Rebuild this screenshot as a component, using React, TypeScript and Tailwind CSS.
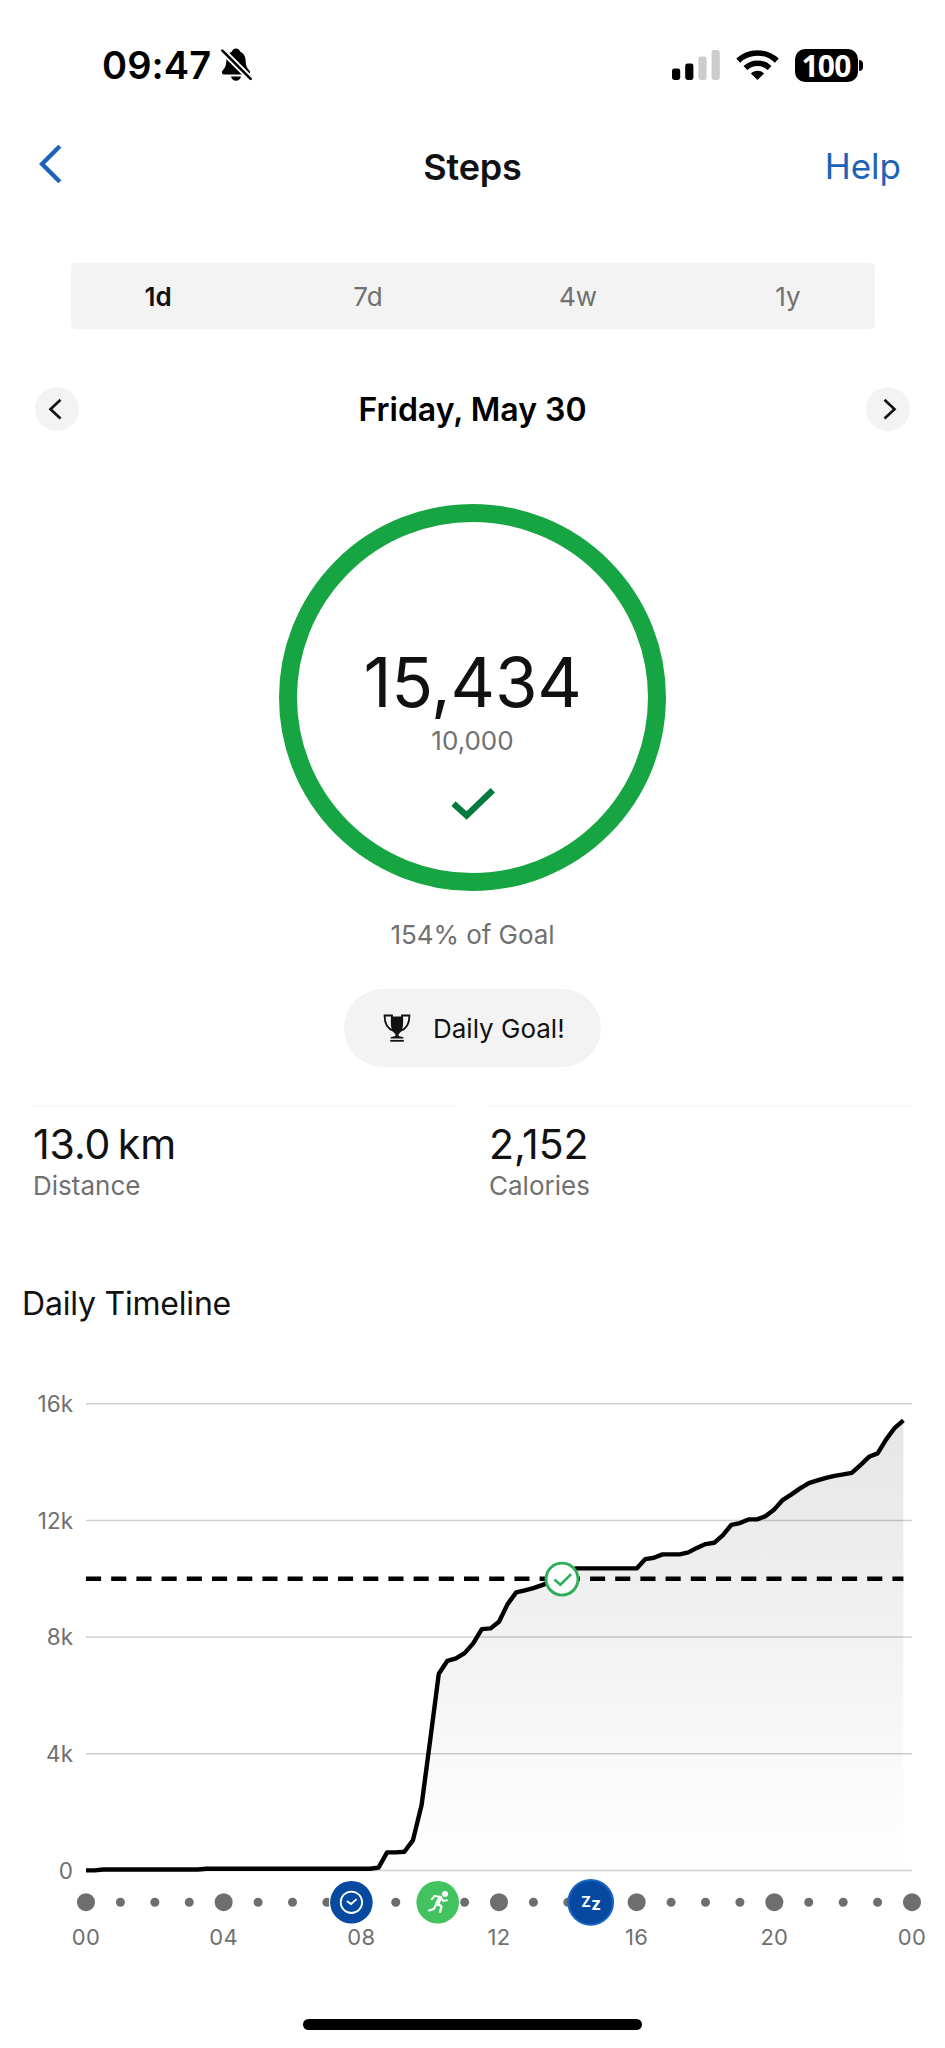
import { ReactNode, useState } from "react";

export default function App() {
  return (
    <div className="w-[945px] h-[2048px] overflow-hidden bg-white flex flex-col font-['Inter',sans-serif] text-[#111111]">
      <StatusBar />
      <NavBar />
      <RangeTabs />
      <DateSwitcher />
      <GoalRing steps="15,434" goal="10,000" />
      <p className="mt-[28px] h-[31px] leading-[31px] shrink-0 text-[26px] tracking-[-0.05px] text-center text-[#707070]">
        154% of Goal
      </p>
      <GoalBadge />
      <Stats />
      <h2 className="mt-[82px] ml-[22px] h-[39px] leading-[40px] shrink-0 text-[32px] tracking-[-0.2px]">
        Daily Timeline
      </h2>
      <TimelineChart />
      <div className="mt-[19px] mx-auto w-[339px] h-[11px] shrink-0 rounded-full bg-black" />
    </div>
  );
}

// Status bar
const StatusBar = () => {
  return (
    <div className="h-[130px] shrink-0 flex items-center justify-between pl-[102px] pr-[82px] text-black">
      <div className="flex items-center">
        <p className="w-[118px] text-[38px] font-[600] tracking-[0.1px] whitespace-nowrap">09:47</p>
        <BellOffIcon />
      </div>
      <div className="flex items-center">
        <SignalIcon />
        <WifiIcon />
        <div className="flex items-center ml-[16px]">
          <div className="w-[63px] h-[33px] rounded-[10px] bg-black flex items-center justify-center">
            <span className="font-['Noto_Sans',sans-serif] text-white text-[30px] leading-[33px] font-[700] tracking-[-0.8px]">
              100
            </span>
          </div>
          <div className="ml-[1.5px] w-[4px] h-[11px] rounded-r-full bg-black" />
        </div>
      </div>
    </div>
  );
};

const BellOffIcon = () => {
  return (
    <svg width="32" height="36" viewBox="0 0 32 36" fill="none">
      <path
        d="M16 1.6C14 1.6 12.5 2.9 12 4.6C8.4 6.2 6.6 9.3 6.4 13.2C6.2 18.5 5.2 20.6 2.6 23.4C1.2 25 2 27.4 4.2 27.4H27.8C30 27.4 30.8 25 29.4 23.4C26.8 20.6 25.8 18.5 25.6 13.2C25.4 9.3 23.6 6.2 20 4.6C19.5 2.9 18 1.6 16 1.6Z"
        fill="black"
      />
      <path d="M11 29.6H21C20.5 32.2 18.6 33.8 16 33.8C13.4 33.8 11.5 32.2 11 29.6Z" fill="black" />
      <path d="M0 1.2L33 34.2" stroke="white" strokeWidth="6.4" />
      <path d="M2.4 3.6L30.6 31.8" stroke="black" strokeWidth="2.6" strokeLinecap="round" />
    </svg>
  );
};

const SignalIcon = () => {
  return (
    <svg width="48" height="30" viewBox="0 0 48 30">
      <rect x="0" y="18.5" width="8.2" height="11.5" rx="2.4" fill="black" />
      <rect x="13.2" y="13.5" width="8.2" height="16.5" rx="2.4" fill="black" />
      <rect x="26.4" y="6.5" width="8.2" height="23.5" rx="2.4" fill="#cccccc" />
      <rect x="39.6" y="0" width="8.2" height="30" rx="2.4" fill="#cccccc" />
    </svg>
  );
};

const WifiIcon = () => {
  return (
    <svg className="ml-[16px]" width="43" height="32" viewBox="0 0 43 32" fill="none">
      <path d="M2.2 11.6C13 1.4 30 1.4 40.8 11.6" stroke="black" strokeWidth="5.6" />
      <path d="M9.4 19C16.2 12.6 26.8 12.6 33.6 19" stroke="black" strokeWidth="5.6" />
      <path d="M14.9 24.4C18.6 21 24.4 21 28.1 24.4L21.5 31Z" fill="black" />
    </svg>
  );
};

// Navigation
const NavBar = () => {
  return (
    <div className="h-[73px] shrink-0 grid grid-cols-3 items-center pl-[39px] pr-[44px]">
      <button className="w-[24px] pb-[5px]">
        <svg width="24" height="40" viewBox="0 0 24 40" fill="none">
          <path d="M20.8 2.3L3 20L20.8 37.7" stroke="#1c63b7" strokeWidth="4.4" />
        </svg>
      </button>
      <h1 className="pl-[5px] text-[36px] font-[600] text-center tracking-[-0.2px]">Steps</h1>
      <button className="text-[35px] text-right text-[#1c63b7]">Help</button>
    </div>
  );
};

const ranges = ["1d", "7d", "4w", "1y"];

const RangeTabs = () => {
  const [active, setActive] = useState("1d");
  return (
    <div className="mt-[60px] ml-[71px] mr-[70px] h-[66px] shrink-0 flex justify-between px-[57px] rounded-[5px] bg-[#f3f3f3] text-[26px]">
      {ranges.map((item) => (
        <button
          key={item}
          onClick={() => setActive(item)}
          className={`${item === active ? "font-[600]" : "text-[#707070]"} w-[60px] text-center`}
        >
          {item}
        </button>
      ))}
    </div>
  );
};

// Date
const DateSwitcher = () => {
  return (
    <div className="mt-[58px] h-[44px] shrink-0 flex items-center justify-between px-[35px]">
      <RoundButton>
        <path d="M25.5 12.8L15.5 22.2L25.5 31.6" stroke="#111111" strokeWidth="2.7" />
      </RoundButton>
      <p className="pt-px text-[32px] font-[600] text-black">Friday, May 30</p>
      <RoundButton>
        <path d="M18.5 12.8L28.5 22.2L18.5 31.6" stroke="#111111" strokeWidth="2.7" />
      </RoundButton>
    </div>
  );
};

const RoundButton = ({ children }: { children: ReactNode }) => {
  return (
    <button className="w-[44px] h-[44px] rounded-full bg-[#f3f3f3]">
      <svg width="44" height="44" viewBox="0 0 44 44" fill="none">
        {children}
      </svg>
    </button>
  );
};

const GoalRing = ({ steps, goal }: { steps: string; goal: string }) => {
  return (
    <div className="mt-[73px] mx-auto w-[387px] h-[387px] shrink-0 rounded-full border-[18px] border-[#17a543] flex flex-col items-center">
      <p className="mt-[124px] h-[72px] leading-[72px] text-[69px] tracking-[-0.3px]">{steps}</p>
      <p className="mt-[3px] h-[40px] leading-[40px] text-[26px] text-[#707070]">{goal}</p>
      <svg className="mt-[26px]" width="44" height="34" viewBox="0 0 44 34" fill="none">
        <path d="M2.5 16.6L15.6 28.6L41.8 3.2" stroke="#007a3d" strokeWidth="6.2" />
      </svg>
    </div>
  );
};

const GoalBadge = () => {
  return (
    <div className="mt-[39px] mx-auto w-[257px] h-[78px] shrink-0 rounded-full bg-[#f3f3f3] flex items-center pl-[39px]">
      <svg width="28" height="28" viewBox="0 0 28 28" fill="none">
        <path
          d="M8 2.6H20C20.4 9 20.2 13.5 18.6 16.6C17.6 18.5 16.4 19.6 15.6 20V22L20.4 23.2V24.4H7.6V23.2L12.4 22V20C11.6 19.6 10.4 18.5 9.4 16.6C7.8 13.5 7.6 9 8 2.6Z"
          fill="#111111"
        />
        <path
          d="M9 3.4V1.5H1.6C1.6 8.5 3.4 14.6 10.6 16.8M19 3.4V1.5H26.4C26.4 8.5 24.6 14.6 17.4 16.8"
          stroke="#111111"
          strokeWidth="1.8"
        />
        <path d="M7.2 26.8H20.8" stroke="#111111" strokeWidth="1.8" />
      </svg>
      <p className="ml-[22px] text-[26px] whitespace-nowrap">Daily Goal!</p>
    </div>
  );
};

const Stats = () => {
  return (
    <div className="mt-[38px] shrink-0 grid grid-cols-2 gap-[33px] px-[33px]">
      <Stat value="13.0 km" label="Distance" />
      <Stat value="2,152" label="Calories" />
    </div>
  );
};

const Stat = ({ value, label }: { value: string; label: string }) => {
  return (
    <div className="border-t-2 border-[#f8f8f8] pt-[12px]">
      <p className="h-[50px] leading-[50px] text-[41px] tracking-[-0.1px] [word-spacing:-4px]">{value}</p>
      <p className="mt-px h-[32px] leading-[32px] text-[26px] text-[#707070]">{label}</p>
    </div>
  );
};

// Total steps, one value for every 15 minutes
const totals = [
  0, 0, 30, 30, 30, 30, 30, 30, 30, 30, 30, 30, 30, 30, 55, 55, 55, 55, 55, 55, 55, 55, 55, 55, 55,
  55, 55, 55, 55, 55, 55, 55, 55, 55, 95, 617, 617, 638, 1040, 2240, 4470, 6740, 7186, 7268, 7450,
  7785, 8274, 8300, 8525, 9130, 9532, 9600, 9680, 9783, 9900, 10090, 10270, 10355, 10355, 10355,
  10355, 10355, 10355, 10355, 10355, 10673, 10720, 10835, 10835, 10835, 10905, 11060, 11190, 11235,
  11487, 11850, 11908, 12035, 12035, 12150, 12378, 12708, 12893, 13100, 13280, 13373, 13462, 13530,
  13580, 13633, 13898, 14183, 14300, 14780, 15178, 15434,
];

const LEFT = 86;
const RIGHT = 912;
const BASE = 547.4;
const HOUR = (RIGHT - LEFT) / 24;

const xAt = (hour: number) => LEFT + hour * HOUR;
const yAt = (steps: number) => BASE - (steps / 4000) * 116.65;

const gridLabels = ["0", "4k", "8k", "12k", "16k"];

const TimelineChart = () => {
  const line = totals.map((v, i) => `${xAt(i / 4).toFixed(1)},${yAt(v).toFixed(1)}`).join(" ");
  const end = xAt(23.75);
  return (
    <svg className="shrink-0" width="945" height="677" viewBox="0 0 945 677" fill="none">
      <defs>
        <linearGradient id="area" x1="0" y1={yAt(15434)} x2="0" y2={BASE} gradientUnits="userSpaceOnUse">
          <stop offset="0" stopColor="#000000" stopOpacity="0.1" />
          <stop offset="1" stopColor="#000000" stopOpacity="0" />
        </linearGradient>
      </defs>
      {gridLabels.map((label, i) => (
        <g key={label}>
          <path d={`M${LEFT} ${yAt(i * 4000)}H${RIGHT}`} stroke="#cfcfcf" strokeWidth="1.5" />
          <text x="73" y={yAt(i * 4000) + 8.2} textAnchor="end" fontSize="22.5" fill="#707070">
            {label}
          </text>
        </g>
      ))}
      <polygon points={`${LEFT},${BASE} ${line} ${end},${BASE}`} fill="url(#area)" />
      <polyline points={line} stroke="black" strokeWidth="4.4" strokeLinejoin="round" />
      <path d={`M${LEFT} ${yAt(10000)}H${end}`} stroke="black" strokeWidth="4.6" strokeDasharray="15.1 10.1" />
      <g transform={`translate(562 ${yAt(10000) + 0.3})`} stroke="#2fae57">
        <circle r="16" fill="white" strokeWidth="2.9" />
        <path d="M-7.6 0.4L-1.6 5.6L9.2 -4.9" strokeWidth="2.6" />
      </g>
      <HourAxis />
    </svg>
  );
};

const HourAxis = () => {
  const hours = Array.from({ length: 25 }, (_, i) => i);
  return (
    <g>
      {hours.map((h) => (
        <circle key={h} cx={xAt(h)} cy="579.2" r={h % 4 === 0 ? 9 : 4.5} fill="#6e6e6e" />
      ))}
      {hours
        .filter((h) => h % 4 === 0)
        .map((h) => (
          <text key={h} x={xAt(h)} y="622" textAnchor="middle" fontSize="22" letterSpacing="0.3" fill="#707070">
            {String(h % 24).padStart(2, "0")}
          </text>
        ))}
      <g transform="translate(351.4 579.3)">
        <circle r="22.5" fill="white" />
        <circle r="21.3" fill="#0549a0" />
        <circle r="10.7" stroke="white" strokeWidth="1.8" />
        <path d="M-4.5 -1.2L-0.3 1.7L5.2 -3.2" stroke="white" strokeWidth="1.9" />
      </g>
      <g transform="translate(437.7 579.3)">
        <circle r="22.5" fill="white" />
        <circle r="21.3" fill="#42c35f" />
        <circle cx="7.3" cy="-8.3" r="3" fill="white" />
        <path d="M-6.4 -2.4L-3 -6.4L2.8 -5.2L5.6 -1.4L10 -2.2" stroke="white" strokeWidth="1.9" />
        <path d="M2.4 -4.6L-0.4 1.4" stroke="white" strokeWidth="4.2" strokeLinecap="round" />
        <path d="M0 1.4L3.8 4.2L2.2 10.4" stroke="white" strokeWidth="2.3" />
        <path d="M-1.4 2L-4 6.8L-9.4 8.4" stroke="white" strokeWidth="2.1" />
      </g>
      <g transform="translate(590.7 579.3)">
        <circle r="22.4" fill="#0549a0" stroke="#1a68c4" strokeWidth="2" />
        <text x="-9.4" y="4.5" fontSize="14.5" fontWeight="700" fill="white">
          Z
        </text>
        <text x="0.6" y="7.4" fontSize="17" fontWeight="700" fill="white">
          z
        </text>
      </g>
    </g>
  );
};
